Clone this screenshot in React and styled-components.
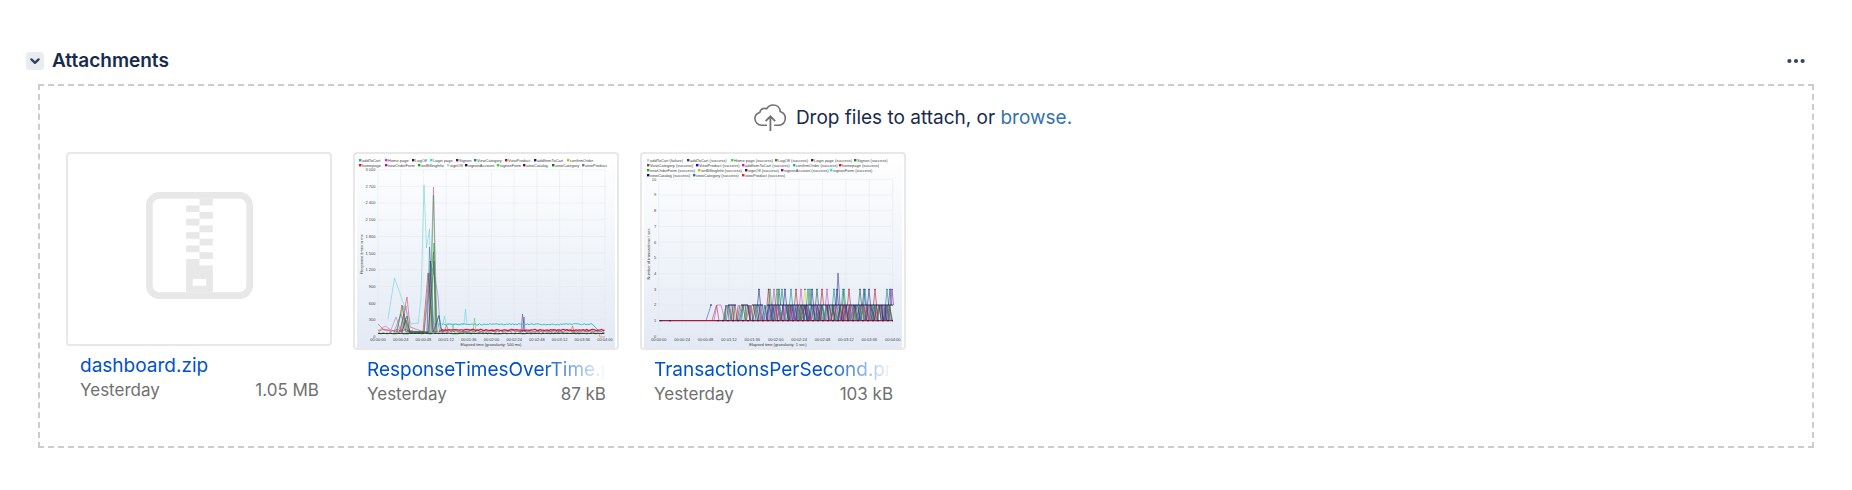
import React from "react";
import styled, { createGlobalStyle } from "styled-components";

const GlobalStyle = createGlobalStyle`
  * { box-sizing: border-box; }
  body {
    margin: 0;
    background: #fff;
    color: #172b4d;
    font-family: Inter, "Liberation Sans", sans-serif;
  }
`;

const Section = styled.section`
  padding: 43px 38px 42px 26px;
`;

const Header = styled.header`
  display: flex;
  align-items: center;
  height: 36px;
`;

const IconButton = styled.button`
  display: flex;
  align-items: center;
  justify-content: center;
  width: ${(p) => p.$size}px;
  height: ${(p) => p.$size}px;
  padding: 0;
  border: 0;
  border-radius: 3px;
  background: ${(p) => (p.$filled ? "#ebecf0" : "transparent")};
  color: #344563;
  cursor: pointer;
`;

const Title = styled.h2`
  flex: 1;
  margin: 0 0 0 8px;
  font-size: 19px;
  font-weight: 600;
  line-height: 24px;
`;

const DropZone = styled.div`
  margin: 5px 0 0 12px;
  padding: 14px 26px 40px;
  border: 2px dashed #ccc;
`;

const DropHint = styled.div`
  display: flex;
  align-items: center;
  justify-content: center;
  gap: 9px;
  height: 36px;
  padding-right: 26px;
  font-size: 19px;
  line-height: 24px;
`;

const BrowseLink = styled.a`
  color: #3572b0;
  text-decoration: none;
`;

const FileGrid = styled.ul`
  display: grid;
  grid-template-columns: repeat(auto-fill, 266px);
  gap: 21px;
  margin: 16px 0 0;
  padding: 0;
  list-style: none;
`;

const Thumb = styled.div`
  display: flex;
  justify-content: center;
  height: ${(p) => (p.$image ? 198 : 194)}px;
  padding: ${(p) => (p.$image ? "0 2px" : "38px 0 0")};
  border: 2px solid #e8e8e8;
  border-radius: 4px;
`;

const Details = styled.div`
  padding: 8px 13px 0 14px;
`;

const FileName = styled.a`
  display: block;
  overflow: hidden;
  color: #0052cc;
  font-size: 19px;
  line-height: 24px;
  text-decoration: none;
  white-space: nowrap;
  mask-image: ${(p) =>
    p.$fade ? "linear-gradient(to right, #000 calc(100% - 64px), transparent)" : "none"};
`;

const Meta = styled.div`
  display: flex;
  justify-content: space-between;
  color: #707070;
  font-size: 17px;
  line-height: 24px;
`;

const ChartSvg = styled.svg`
  width: 100%;
  height: 194px;
  font-family: "Liberation Sans", sans-serif;
  font-size: 4px;
`;

const Chevron = () => (
  <svg width="18" height="18" viewBox="0 0 18 18" fill="none" stroke="currentColor" strokeWidth="2.4" strokeLinecap="round" strokeLinejoin="round" aria-hidden="true">
    <path d="M5.4 7.4 9 10.8l3.6-3.4" />
  </svg>
);

const Dots = () => (
  <svg width="18" height="6" viewBox="0 0 18 6" fill="currentColor" aria-hidden="true">
    <circle cx="2.4" cy="3" r="2.1" />
    <circle cx="9" cy="3" r="2.1" />
    <circle cx="15.6" cy="3" r="2.1" />
  </svg>
);

const CloudUpload = () => (
  <svg width="33" height="28" viewBox="0 0 33 28" fill="none" stroke="#707070" strokeWidth="1.6" aria-hidden="true">
    <path d="M13 21.2H7.8C3.8 21.2.9 18.2.9 14.6c0-3 1.800-5.300 4.900-6.200C6 5.300 9.200 3.600 12.600 4.700 14.200 2.300 16.600 1 19.200 1c4 0 6.800 2.700 7 6.600 3.100 1 5.100 3.700 5.100 6.900 0 3.900-2.900 6.700-6.500 6.700h-4.600" />
    <path d="M16.400 27V12.400M11.600 17.200l4.800-4.900 4.800 4.900" strokeWidth="1.800" />
  </svg>
);

const ZipIcon = () => (
  <svg width="107" height="107" viewBox="0 0 16 16" fill="#e8e8e8" role="img" aria-label="Zip archive">
    <rect x=".5" y=".5" width="15" height="15" rx="1.500" fill="none" stroke="#e8e8e8" />
    <path d="M8 1h2v1H8zM6 2h2v1H6zM8 3h2v1H8zM6 4h2v1H6zM8 5h2v1H8zM6 6h2v1H6zM8 7h2v1H8zM6 8h2v1H6zM8 9h2v1H8z" />
    <path fillRule="evenodd" d="M6 10h2v1h2v4H6zM7 13v1h2v-1z" />
  </svg>
);

const TIMES = ["00:00:00", "00:00:24", "00:00:48", "00:01:12", "00:01:36", "00:02:00", "00:02:24", "00:02:48", "00:03:12", "00:03:36", "00:04:00"];

function Chart({ id, label, left, right, top, yLabels, yTitle, xTitle, legend, children }) {
  const bottom = 182.500;
  const rowStep = (bottom - top) / (yLabels.length - 1);
  const colStep = (right - left) / 10;
  return (
    <ChartSvg viewBox="0 0 258 194" preserveAspectRatio="none" role="img" aria-label={label}>
      <defs>
        <linearGradient id={id} x1="0" y1="0" x2="0" y2="1">
          <stop offset="0" stopColor="#fff" />
          <stop offset="1" stopColor="#e3eaf5" />
        </linearGradient>
      </defs>
      <rect width="258" height="194" fill={`url(#${id})`} />
      {legend.map((row, r) =>
        row.map(([x, color, name]) => (
          <g key={r + name}>
            <rect x={x - 1} y={5 + r * 5} width="2.400" height="2.400" fill={color} />
            <text x={x + 2} y={7.600 + r * 5} fill="#444">{name}</text>
          </g>
        ))
      )}
      {yLabels.map((text, i) => (
        <g key={text}>
          <path d={`M${left} ${top + i * rowStep}H${right}`} stroke="#e2e6ec" strokeWidth=".5" />
          <text x={left - 2.500} y={top + i * rowStep + 1.400} textAnchor="end" fill="#444">{text}</text>
        </g>
      ))}
      {TIMES.map((text, i) => (
        <g key={text}>
          <path d={`M${left + i * colStep} ${top}V${bottom}`} stroke="#e2e6ec" strokeWidth=".5" />
          <text x={left + i * colStep} y="187.200" textAnchor="middle" fill="#444">{text}</text>
        </g>
      ))}
      <text x="134" y="191.500" textAnchor="middle" fill="#333">{xTitle}</text>
      <text transform="translate(6.400 100) rotate(-90)" textAnchor="middle" fill="#333">{yTitle}</text>
      {children}
    </ChartSvg>
  );
}

const RESPONSE_LEGEND = [
  [[3, "#2ab", "addToCart"], [29, "#e2e", "Home page"], [56, "#415", "LogOff"], [74, "#1ee", "Login page"], [100, "#707", "Signon"], [118, "#188", "ViewCategory"], [149, "#b11", "ViewProduct"], [178, "#11b", "addItemToCart"], [211, "#bb2", "confirmOrder"]],
  [[3, "#e11", "homepage"], [29, "#b1b", "newOrderForm"], [62, "#1a1", "setBillingInfo"], [91, "#ccc", "signOff"], [109, "#117", "signonAccount"], [141, "#1e1", "signonForm"], [167, "#711", "viewCatalog"], [196, "#171", "viewCategory"], [226, "#777", "viewProduct"]],
];

const THROUGHPUT_LEGEND = [
  [[4, "#ccc", "addToCart (failure)"], [44, "#155", "addToCart (success)"], [88, "#2e2", "Home page (success)"], [132, "#662", "LogOff (success)"], [168, "#711", "Login page (success)"], [211, "#181", "Signon (success)"]],
  [[4, "#555", "ViewCategory (success)"], [53, "#11c", "ViewProduct (success)"], [99, "#c1c", "addItemToCart (success)"], [150, "#1bb", "confirmOrder (success)"], [196, "#e11", "homepage (success)"]],
  [[4, "#1b1", "newOrderForm (success)"], [55, "#bb1", "setBillingInfo (success)"], [102, "#415", "signOff (success)"], [138, "#818", "signonAccount (success)"], [187, "#1ee", "signonForm (success)"]],
  [[4, "#117", "viewCatalog (success)"], [50, "#188", "viewCategory (success)"], [99, "#e22", "viewProduct (success)"]],
];

const COLORS = ["#26268c", "#0c8c8c", "#b01c2c", "#7c2090", "#26913a", "#4f545c", "#c04cc0", "#155"];

/* Repeatable pseudo-random numbers, so that the series never change between renders. */
function makeRandom(seed) {
  let s = seed;
  return () => {
    s = (s * 1103515245 + 12345) % 2147483648;
    return s / 2147483648;
  };
}

function noisyLine(seed, from, to, y, spread) {
  const rnd = makeRandom(seed);
  const points = [];
  for (let x = from; x <= to; x += 1.500) points.push(`${x},${(y + (rnd() - 0.5) * spread).toFixed(1)}`);
  return points.join(" ");
}

const RESPONSE_SPIKES = [
  ["#45cfd2", "31,165 37.500,124 46,148 54,170 60,169 61,170 64,145 67,31 69.500,94 72.500,75 74,150 77,170 86,170 87.500,162 89,170 107,170 108.500,155 110,170"],
  ["#b050b0", "21,177 28,172 34,176 39,163 44,178 49,152 52,177 72,178 76.500,33 80,178"],
  ["#555", "42,179 47,160 51,178 67,178 76.500,98 80,179"],
  ["#7c2020", "40,178 45,151 49,178 66,178 71,119 76,178"],
  ["#d02040", "21,170 26,175 43,178 50,143 53,173 67,178 72,119 75,178 88,176 89.500,171 91,176"],
  ["#5860c8", "70,178 73,107 78,124 81,142 83,172 86,178"],
  ["#222a7c", "45,178 49,166 53,178 72,178 73.500,107 76,178 82,162 85,178"],
  ["#138080", "37,178 44,160 48,177 70,178 72.500,93 77,178 82,161 84,178"],
  ["#333", "45,178 50,162 53,179 71,179 77,107 79,179"],
  ["#2c9c2c", "39,179 46,152 50,176 53,179 73,179 76.500,41 79,160 83,178"],
  ["#178a17", "44,179 48,164 52,178 74,179 77,89 78,178"],
  ["#46c846", "95,178 96,171 97,178 116,178 117.500,164 119,178"],
  ["#632890", "164,178 165.500,160 167,178"],
  ["#26268c", "165.500,178 167,163 168,178"],
  ["#e03040", "214,177 215.500,172 217,177"],
];

function ResponseTimesChart() {
  return (
    <Chart
      id="response-bg" label="Response times over time" left={21} right={248} top={15.700}
      yLabels={["3 000", "2 700", "2 400", "2 100", "1 800", "1 500", "1 200", "900", "600", "300", "0"]}
      yTitle="Response times in ms" xTitle="Elapsed time (granularity: 500 ms)" legend={RESPONSE_LEGEND}
    >
      <g fill="none" strokeWidth=".6" strokeLinejoin="round">
        <g strokeOpacity=".8">
          {RESPONSE_SPIKES.map(([color, points]) => (
            <polyline key={color + points} points={points} stroke={color} />
          ))}
        </g>
        <polyline points={`${noisyLine(3, 85, 236, 170.300, 1.400)} 239,174 242,177`} stroke="#35c4c8" strokeWidth="1" />
        <polyline points={noisyLine(5, 84, 248, 176, 1.200)} stroke="#e01c34" strokeWidth="1.300" />
        <polyline points={noisyLine(8, 21, 56, 176.500, 2)} stroke="#c02850" />
        <polyline points={noisyLine(9, 82, 248, 177.300, 1.400)} stroke="#75205c" />
        <polyline points={noisyLine(11, 21, 248, 179.400, .600)} stroke="#23602c" strokeWidth="1.200" />
        <path d="M21 179.400H248" stroke="#3a2830" strokeWidth=".8" strokeDasharray="2 2" />
        <path d="M242 179l1 4h5" stroke="#d66" />
      </g>
    </Chart>
  );
}

const PEAKS = [
  [115, 0], [124.500, 2], [126, 4], [130, 6], [133, 4], [135, 7], [138, 1], [141, 0], [147, 1], [152, 2], [157, 6], [161, 8], [164, 1], [166, 4], [168, 0], [173, 7], [178, 2], [183, 6], [190, 1], [193, 0], [199, 4], [200, 1], [205, 2], [216, 7], [220, 0], [221, 1], [225, 0], [231, 2], [243, 1], [246, 0], [248, 3],
];

function transitions() {
  const rnd = makeRandom(21);
  const list = [];
  for (let x = 79; x < 246; x += x < 100 ? 1.100 : x < 123 ? 0.7 : 0.5) {
    const width = 1 + rnd() * 2.500;
    const color = COLORS[Math.floor(rnd() * COLORS.length)];
    const up = rnd() > 0.5;
    list.push([`${x.toFixed(1)},${up ? 166.700 : 151} ${(x + width).toFixed(1)},${up ? 151 : 166.700}`, color]);
  }
  return list;
}

const TRANSITIONS = transitions();

function ThroughputChart() {
  return (
    <Chart
      id="throughput-bg" label="Transactions per second" left={14.700} right={248.700} top={25.300}
      yLabels={["10", "9", "8", "7", "6", "5", "4", "3", "2", "1", "0"]}
      yTitle="Number of transactions / sec" xTitle="Elapsed time (granularity: 1 sec)" legend={THROUGHPUT_LEGEND}
    >
      <g fill="none" strokeWidth=".6">
        <polyline points="62,166.700 67,151" stroke="#4450c8" />
        <polyline points="68,166.700 72.500,151 75,166.700" stroke="#c02840" />
        <polyline points="70,166.700 73,151 77,151 81,166.700" stroke="#c04cc0" />
        {TRANSITIONS.map(([points, color]) => (
          <polyline key={points} points={points} stroke={color} />
        ))}
        {PEAKS.map(([x, c]) => (
          <polyline key={x} points={`${x - 1.500},151 ${x},135.300 ${x + 1.500},151`} stroke={c === 8 ? "#dddd20" : COLORS[c]} />
        ))}
        {PEAKS.map(([x, c]) => (
          <rect key={`dot-${x}`} x={x - 0.600} y="134.800" width="1.200" height="1.200" fill={COLORS[c % 8]} />
        ))}
        <polyline points="192.500,151 194,119 196,151" stroke="#333c9c" />
        <path d="M66 151h2M84 151h8M97 151h7M108 151h11M123 151h126" stroke="#252060" strokeWidth="1.200" />
        <path d="M15.500 166.700H249" stroke="#a51d3a" strokeWidth="1.200" />
        <path d="M15.500 166.700h3M25 166.700h2M73 166.700H249" stroke="#292660" strokeWidth="1.200" strokeDasharray="2 3" />
      </g>
    </Chart>
  );
}

const FILES = [
  { name: "dashboard.zip", size: "1.05 MB", preview: <ZipIcon /> },
  { name: "ResponseTimesOverTime.png", size: "87 kB", image: true, preview: <ResponseTimesChart /> },
  { name: "TransactionsPerSecond.png", size: "103 kB", image: true, preview: <ThroughputChart /> },
];

export default function App() {
  return (
    <>
      <GlobalStyle />
      <Section>
        <Header>
          <IconButton type="button" $size={18} $filled aria-label="Collapse attachments" aria-expanded="true">
            <Chevron />
          </IconButton>
          <Title>Attachments</Title>
          <IconButton type="button" $size={36} aria-label="More options">
            <Dots />
          </IconButton>
        </Header>
        <DropZone>
          <DropHint>
            <CloudUpload />
            <span>
              Drop files to attach, or <BrowseLink href="#browse">browse.</BrowseLink>
            </span>
          </DropHint>
          <FileGrid>
            {FILES.map((file) => (
              <li key={file.name}>
                <Thumb $image={file.image}>{file.preview}</Thumb>
                <Details>
                  <FileName href={`#${file.name}`} $fade={file.image}>{file.name}</FileName>
                  <Meta>
                    <span>Yesterday</span>
                    <span>{file.size}</span>
                  </Meta>
                </Details>
              </li>
            ))}
          </FileGrid>
        </DropZone>
      </Section>
    </>
  );
}
